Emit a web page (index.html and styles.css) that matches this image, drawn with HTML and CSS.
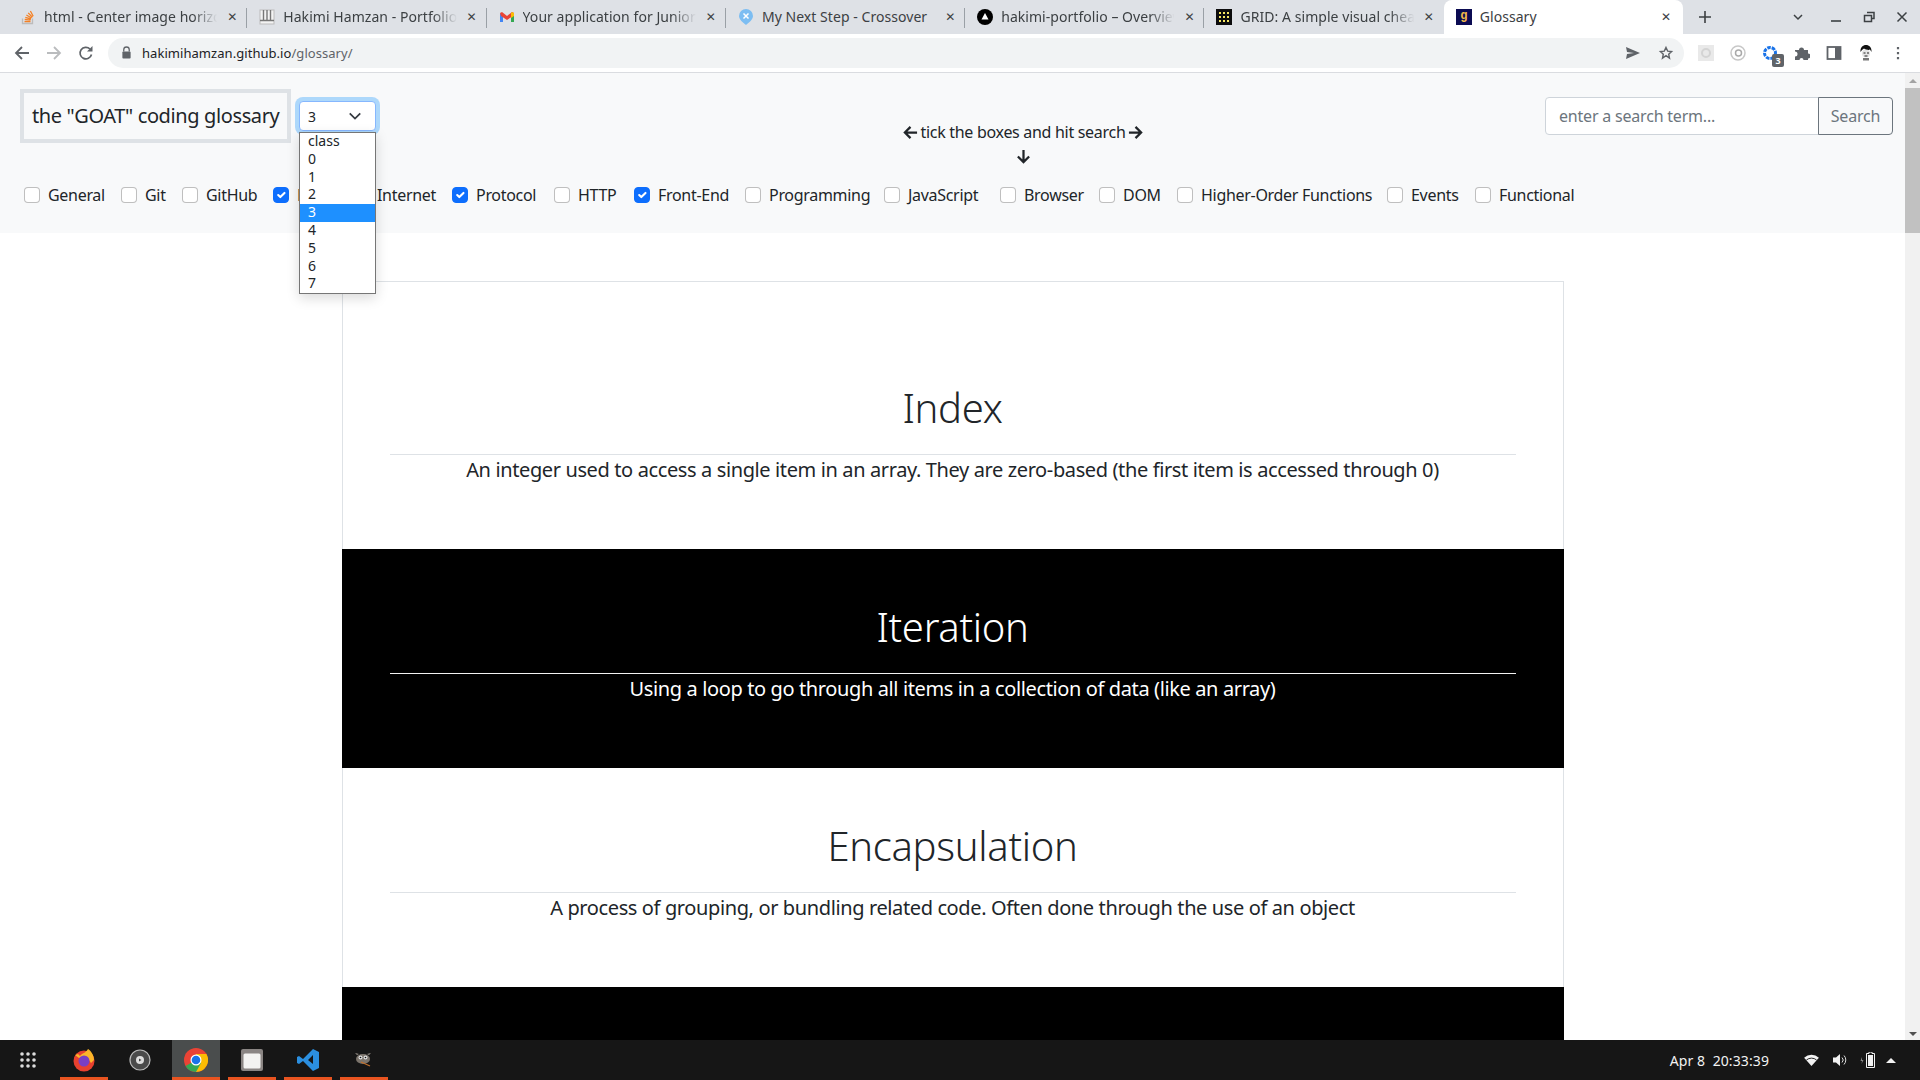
FILE: index.html
```html
<!DOCTYPE html>
<html lang="en">
<head>
    <meta charset="UTF-8">
    <title>Glossary</title>
    <link rel="stylesheet" href="styles.css">
</head>
<body>

    <!-- Browser tabs -->
    <div class="tabstrip">
        <div class="tab">
            <svg class="favicon" viewBox="0 0 16 16"><path d="M2.5 9.5v5h10v-5" fill="none" stroke="#bcbbbb" stroke-width="1.3"/><path d="M4.5 12.6h6M4.7 10.5l5.9.6M5.3 8.4l5.7 1.6M6.4 6l5.1 3M8.2 3.9l4.2 4.3M10.4 2l2.8 5.2" stroke="#f48024" stroke-width="1.3"/></svg>
            <span class="tab-title fade">html - Center image horizontally</span>
            <span class="tab-close">&#x2715;</span>
        </div>
        <div class="tab">
            <svg class="favicon" viewBox="0 0 16 16"><rect x="1" y="1" width="14" height="14" fill="#f3f3f3" stroke="#bbb"/><path d="M4.500 1v10M8 1v10M11.500 1v10M1 11.500h14" stroke="#777" stroke-width="1.400"/></svg>
            <span class="tab-title fade">Hakimi Hamzan - Portfolio</span>
            <span class="tab-close">&#x2715;</span>
        </div>
        <div class="tab">
            <svg class="favicon" viewBox="0 0 16 16"><path d="M1 4v9h3V7z" fill="#4285f4"/><path d="M15 4v9h-3V7z" fill="#34a853"/><path d="M1 4l2-1 5 4 5-4 2 1-1 3-6 4-6-4z" fill="#ea4335"/><path d="M12 4l1-1 2 1v3l-3 2z" fill="#fbbc04"/></svg>
            <span class="tab-title fade">Your application for Junior</span>
            <span class="tab-close">&#x2715;</span>
        </div>
        <div class="tab">
            <svg class="favicon" viewBox="0 0 16 16"><path d="M8 0a7 7 0 0 1 7 7c0 3.500-4 6.500-7 9-3-2.500-7-5.500-7-9a7 7 0 0 1 7-7z" fill="#7cbdf2"/><path d="M5.500 4.500l5 5M10.500 4.500l-5 5" stroke="#fff" stroke-width="1.500"/></svg>
            <span class="tab-title">My Next Step - Crossover</span>
            <span class="tab-close">&#x2715;</span>
        </div>
        <div class="tab">
            <svg class="favicon" viewBox="0 0 16 16"><circle cx="8" cy="8" r="8" fill="#000"/><path d="M8 4l3.500 6.500h-7z" fill="#fff"/></svg>
            <span class="tab-title fade">hakimi-portfolio – Overview</span>
            <span class="tab-close">&#x2715;</span>
        </div>
        <div class="tab tab-last">
            <svg class="favicon" viewBox="0 0 16 16"><rect width="16" height="16" fill="#0c0c0c"/><path d="M3 3h2v2H3zM7 3h2v2H7zM11 3h2v2h-2zM3 7h2v2H3zM7 7h2v2H7zM11 7h2v2h-2zM3 11h2v2H3zM7 11h2v2H7zM11 11h2v2h-2z" fill="#f5e663"/></svg>
            <span class="tab-title fade">GRID: A simple visual cheatsheet</span>
            <span class="tab-close">&#x2715;</span>
        </div>
        <div class="tab tab-active">
            <span class="favicon favicon-g">g</span>
            <span class="tab-title">Glossary</span>
            <span class="tab-close">&#x2715;</span>
        </div>
        <svg class="new-tab" viewBox="0 0 12 12"><path d="M6 0v12M0 6h12" stroke="#3c4043" stroke-width="1.600"/></svg>
        <div class="window-btns">
            <svg viewBox="0 0 12 12"><path d="M2 4l4 4 4-4" fill="none" stroke="#3c4043" stroke-width="1.500"/></svg>
            <svg viewBox="0 0 12 12"><path d="M1 10h10" stroke="#3c4043" stroke-width="1.600"/></svg>
            <svg viewBox="0 0 12 12"><path d="M4 1.500h7v6H8.500M1.500 4.500h7v6h-7z" fill="none" stroke="#3c4043" stroke-width="1.500"/></svg>
            <svg viewBox="0 0 12 12"><path d="M1.500 1.500l9 9M10.500 1.500l-9 9" stroke="#3c4043" stroke-width="1.500"/></svg>
        </div>
    </div>

    <!-- Address bar -->
    <div class="toolbar">
        <svg class="nav-icon" viewBox="0 0 16 16"><path d="M15 8H2M8 2L2 8l6 6" fill="none" stroke="#5f6368" stroke-width="1.800"/></svg>
        <svg class="nav-icon" viewBox="0 0 16 16"><path d="M1 8h13M8 2l6 6-6 6" fill="none" stroke="#babcbe" stroke-width="1.800"/></svg>
        <svg class="nav-icon" viewBox="0 0 16 16"><path d="M13.500 9.500A5.800 5.800 0 1 1 12 4" fill="none" stroke="#5f6368" stroke-width="1.700"/><path d="M14.500 1v5.500H9z" fill="#5f6368"/></svg>
        <div class="omnibox">
            <svg class="lock" viewBox="0 0 12 14"><path d="M3 6V4a3 3 0 0 1 6 0v2" fill="none" stroke="#5f6368" stroke-width="1.400"/><rect x="1.500" y="6" width="9" height="7.500" rx="1" fill="#5f6368"/></svg>
            <span class="url"><b>hakimihamzan.github.io</b>/glossary/</span>
            <svg class="omni-icon" viewBox="0 0 16 16"><path d="M1 2l14 6-14 6 1-5 7-1-7-1z" fill="#5f6368"/></svg>
            <svg class="omni-icon" viewBox="0 0 16 16"><path d="M8 2.500l1.700 3.600 3.900.5-2.900 2.600.8 3.900L8 10.700l-3.500 2.400.8-3.900-2.900-2.600 3.900-.5z" fill="none" stroke="#5f6368" stroke-width="1.400"/></svg>
        </div>
        <div class="extensions">
            <svg viewBox="0 0 16 16"><rect width="16" height="16" fill="#e9e9e9"/><circle cx="8" cy="8" r="4" fill="none" stroke="#d4d4d4" stroke-width="2"/></svg>
            <svg viewBox="0 0 16 16"><circle cx="8" cy="8" r="7" fill="none" stroke="#c8c8c8" stroke-width="1.500"/><circle cx="8.500" cy="8" r="3" fill="none" stroke="#aaa" stroke-width="1.500"/></svg>
            <span class="ext-badged">
                <svg viewBox="0 0 16 16"><circle cx="8" cy="8" r="5.500" fill="none" stroke="#1a73e8" stroke-width="3" stroke-dasharray="3.500 1"/></svg>
                <span class="badge">3</span>
            </span>
            <svg viewBox="0 0 16 16"><path d="M1 5h4a2.500 2.500 0 1 1 5 0h4v3.500a2.500 2.500 0 1 1 0 5V15h-4.500a2 2 0 1 0-4 0H1v-3.500a2.500 2.500 0 1 0 0-5z" fill="#5f6368"/></svg>
            <svg viewBox="0 0 16 16"><rect x="1.500" y="2" width="13" height="12" fill="none" stroke="#5f6368" stroke-width="1.800"/><rect x="9" y="2" width="5.500" height="12" fill="#5f6368"/></svg>
            <svg viewBox="0 0 16 16"><path d="M2.500 7C2 2.500 5 0 8 0s6 2.500 5.500 7L12 4.500 9 5.500 6 3.500 4 5z" fill="#111"/><circle cx="8" cy="8.500" r="4" fill="#e4e4e4"/><path d="M5.500 8h2M9 8h2M6.500 11h3" stroke="#222"/><path d="M5 13h6v2.500H5z" fill="#777"/></svg>
            <svg viewBox="0 0 16 16"><path d="M8 2v2.200M8 7v2.200M8 12v2.200" stroke="#5f6368" stroke-width="2.200"/></svg>
        </div>
    </div>

    <!-- Page -->
    <div class="viewport">
        <div class="page">
            <nav class="navbar">
                <div class="nav-top">
                    <div class="brand">the "GOAT" coding glossary</div>
                    <div class="class-select">
                        <div class="select-box">
                            <span>3</span>
                            <svg viewBox="0 0 16 16"><path d="M2 5l6 6 6-6" fill="none" stroke="#343a40" stroke-width="2"/></svg>
                        </div>
                        <ul class="select-list">
                            <li>class</li>
                            <li>0</li>
                            <li>1</li>
                            <li>2</li>
                            <li class="selected">3</li>
                            <li>4</li>
                            <li>5</li>
                            <li>6</li>
                            <li>7</li>
                        </ul>
                    </div>
                    <div class="hint">
                        <div class="hint-line">
                            <svg viewBox="0 0 16 16"><path d="M15 8H2M8 2L2 8l6 6" fill="none" stroke="#212529" stroke-width="2.400"/></svg>
                            <span>tick the boxes and hit search</span>
                            <svg viewBox="0 0 16 16"><path d="M1 8h13M8 2l6 6-6 6" fill="none" stroke="#212529" stroke-width="2.400"/></svg>
                        </div>
                        <svg class="hint-down" viewBox="0 0 16 16"><path d="M8 1v13M2 8l6 6 6-6" fill="none" stroke="#212529" stroke-width="2.400"/></svg>
                    </div>
                    <form class="search">
                        <input class="search-input" type="text" placeholder="enter a search term...">
                        <button class="search-btn" type="button">Search</button>
                    </form>
                </div>
                <div class="filters">
                    <label class="check"><input type="checkbox">General</label>
                    <label class="check"><input type="checkbox">Git</label>
                    <label class="check"><input type="checkbox">GitHub</label>
                    <label class="check"><input type="checkbox" checked>HTML</label>
                    <label class="check"><input type="checkbox">Internet</label>
                    <label class="check"><input type="checkbox" checked>Protocol</label>
                    <label class="check"><input type="checkbox">HTTP</label>
                    <label class="check"><input type="checkbox" checked>Front-End</label>
                    <label class="check"><input type="checkbox">Programming</label>
                    <label class="check"><input type="checkbox">JavaScript</label>
                    <label class="check"><input type="checkbox">Browser</label>
                    <label class="check"><input type="checkbox">DOM</label>
                    <label class="check"><input type="checkbox">Higher-Order Functions</label>
                    <label class="check"><input type="checkbox">Events</label>
                    <label class="check"><input type="checkbox">Functional</label>
                </div>
            </nav>

            <main class="card">
                <section class="term term-first">
                    <h1>Index</h1>
                    <hr>
                    <p>An integer used to access a single item in an array. They are zero-based (the first item is accessed through 0)</p>
                </section>
                <section class="term term-dark">
                    <h1>Iteration</h1>
                    <hr>
                    <p>Using a loop to go through all items in a collection of data (like an array)</p>
                </section>
                <section class="term">
                    <h1>Encapsulation</h1>
                    <hr>
                    <p>A process of grouping, or bundling related code. Often done through the use of an object</p>
                </section>
                <section class="term term-dark"></section>
            </main>
        </div>
        <div class="scrollbar">
            <span class="arrow-up"></span>
            <span class="thumb"></span>
            <span class="arrow-down"></span>
        </div>
    </div>

    <!-- Desktop panel -->
    <footer class="taskbar">
        <svg class="apps" viewBox="0 0 16 16" fill="#ddd"><circle cx="2" cy="2" r="1.800"/><circle cx="8" cy="2" r="1.800"/><circle cx="14" cy="2" r="1.800"/><circle cx="2" cy="8" r="1.800"/><circle cx="8" cy="8" r="1.800"/><circle cx="14" cy="8" r="1.800"/><circle cx="2" cy="14" r="1.800"/><circle cx="8" cy="14" r="1.800"/><circle cx="14" cy="14" r="1.800"/></svg>
        <div class="launcher running">
            <svg viewBox="0 0 24 24"><circle cx="12" cy="13" r="10.500" fill="#e8412f"/><path d="M3 7l3-1 2 2c2-3 6-3 8-7 3 2 6 6 6 11l-3 3-5-7-7 2z" fill="#fcb529"/><circle cx="12" cy="13" r="5.500" fill="#7a3fc4"/></svg>
        </div>
        <div class="launcher">
            <svg viewBox="0 0 24 24"><circle cx="12" cy="12" r="10" fill="#4a4a4a" stroke="#bbb" stroke-width="1.200"/><circle cx="12" cy="12" r="4" fill="#ddd"/><path d="M11 10.500l2.500 1.500-2.500 1.500z" fill="#444"/></svg>
        </div>
        <div class="launcher running active">
            <svg viewBox="0 0 24 24"><circle cx="12" cy="12" r="12" fill="#ea4335"/><path d="M12 6h10.400A12 12 0 0 1 12 24z" fill="#fbbc04"/><path d="M12 12L1.600 18A12 12 0 0 0 12 24l5-9z" fill="#34a853"/><circle cx="12" cy="12" r="5.500" fill="#fff"/><circle cx="12" cy="12" r="4.300" fill="#1a73e8"/></svg>
        </div>
        <div class="launcher running">
            <svg viewBox="0 0 24 24"><rect x="1" y="1" width="22" height="22" rx="2" fill="#8a8583"/><rect x="3.500" y="5.500" width="17" height="15" rx="1.500" fill="#f3f3f1"/></svg>
        </div>
        <div class="launcher running">
            <svg viewBox="0 0 24 24"><path d="M17 1l6 3v16l-6 3-10-10-4 3-2-1V9l2-1 4 3zm0 6l-5 5 5 4z" fill="#2b8fe0"/></svg>
        </div>
        <div class="launcher running">
            <svg viewBox="0 0 24 24"><ellipse cx="11" cy="11" rx="7" ry="5" fill="#7b746c"/><path d="M5 7l-2-2 4 1zM17 7l2-2-4 1z" fill="#9a938b"/><circle cx="8.500" cy="9.500" r="2" fill="#ddd"/><circle cx="13.500" cy="9.500" r="2" fill="#ddd"/><circle cx="8.500" cy="9.500" r=".8" fill="#111"/><circle cx="13.500" cy="9.500" r=".8" fill="#111"/><path d="M9 14l9 4" stroke="#c2702c" stroke-width="1.300"/></svg>
        </div>
        <div class="tray">
            <span class="clock">Apr 8&nbsp; 20:33:39</span>
            <svg class="tray-wifi" viewBox="0 0 16 13"><path d="M0 4a12 12 0 0 1 16 0l-8 9z" fill="#f2f2f2"/><path d="M2.500 6.500a8.500 8.500 0 0 1 11 0" fill="none" stroke="#161616"/></svg>
            <svg class="tray-vol" viewBox="0 0 16 14"><path d="M1 4.500h3L8 1v12L4 9.500H1z" fill="#f2f2f2"/><path d="M10 4.500a3.500 3.500 0 0 1 0 5M12 2.500a6.500 6.500 0 0 1 0 9" fill="none" stroke="#ddd"/></svg>
            <svg class="tray-bat" viewBox="0 0 16 16"><path d="M2 5l-1.500 4h1.500l-.5 3 2-4h-1.500z" fill="#888"/><path d="M9 0h3v1.500h2.500v14h-8v-14H9z" fill="none" stroke="#f2f2f2"/><rect x="8" y="3" width="5" height="11" fill="#f2f2f2"/></svg>
            <span class="tray-up"></span>
        </div>
    </footer>

</body>
</html>
```

FILE: styles.css
```css
* {
    box-sizing: border-box;
}

body {
    margin: 0;
    height: 100vh;
    overflow: hidden;
    display: flex;
    flex-direction: column;
    font-family: "Noto Sans", sans-serif;
    color: #212529;
    background: #fff;
}

/* Abas do navegador */
.tabstrip {
    height: 34px;
    flex: none;
    display: flex;
    align-items: center;
    padding-left: 8px;
    background: #dee1e6;
}

.tab {
    position: relative;
    width: 239.3px;
    height: 34px;
    flex: none;
    display: flex;
    align-items: center;
    padding: 0 8px 0 12px;
    font-size: 14px;
    letter-spacing: 0.05px;
    color: #3c4043;
}

.tab::after {
    content: "";
    position: absolute;
    right: 0;
    top: 8px;
    height: 20px;
    width: 1px;
    background: #9aa0a6;
}

.tab-last::after,
.tab-active::after {
    display: none;
}

.tab-active {
    background: #fff;
    border-radius: 8px 8px 0 0;
    padding-right: 10px;
}

.favicon {
    width: 16px;
    height: 16px;
    flex: none;
    margin-right: 8px;
}

.favicon-g {
    background: #0b0b52;
    color: #f0b849;
    font: bold 12px/15px "Liberation Mono", monospace;
    text-align: center;
}

.tab-title {
    flex: 1;
    overflow: hidden;
    white-space: nowrap;
    margin: 0 6px 2px 0;
}

.tab-title.fade {
    -webkit-mask-image: linear-gradient(to right, #000 85%, transparent 99%);
    mask-image: linear-gradient(to right, #000 85%, transparent 99%);
}

.tab-close {
    width: 14px;
    flex: none;
    font-size: 12px;
    font-weight: 700;
    font-family: "DejaVu Sans", sans-serif;
    color: #3c4043;
    text-align: center;
}

.new-tab {
    width: 12px;
    height: 12px;
    margin-left: 16px;
}

.window-btns {
    margin-left: auto;
    display: flex;
    gap: 21px;
    padding-right: 12px;
}

.window-btns svg {
    width: 12px;
    height: 12px;
}

.window-btns svg:first-child {
    margin-right: 5px;
}

/* Barra de endereco */
.toolbar {
    height: 39px;
    flex: none;
    display: flex;
    align-items: center;
    padding: 0 14px 1px;
    background: #fff;
    border-bottom: 1px solid #dadce0;
}

.nav-icon {
    width: 16px;
    height: 16px;
    margin-right: 16px;
}

.omnibox {
    width: 1576px;
    height: 30px;
    margin-left: -2px;
    flex: none;
    display: flex;
    align-items: center;
    padding: 0 10px 0 13px;
    border-radius: 15px;
    background: #f1f3f4;
}

.lock {
    width: 11px;
    height: 13px;
    margin-right: 10px;
}

.url {
    flex: 1;
    font-size: 13px;
    letter-spacing: 0.05px;
    color: #5f6368;
}

.url b {
    font-weight: 400;
    color: #202124;
}

.omni-icon {
    width: 16px;
    height: 16px;
    margin-left: 17px;
}

.extensions {
    display: flex;
    align-items: center;
    margin-left: 14px;
    gap: 16px;
}

.extensions svg {
    width: 16px;
    height: 16px;
    display: block;
}

.ext-badged {
    position: relative;
}

.badge {
    position: absolute;
    right: -6px;
    bottom: -6px;
    width: 12px;
    height: 13px;
    background: #5f6368;
    color: #fff;
    border-radius: 2px;
    font-size: 9px;
    font-weight: 700;
    line-height: 13px;
    text-align: center;
}

/* Pagina */
.viewport {
    flex: 1;
    min-height: 0;
    display: flex;
}

.page {
    flex: 1;
    min-width: 0;
    overflow: hidden;
}

.scrollbar {
    width: 15px;
    flex: none;
    display: flex;
    flex-direction: column;
    align-items: center;
    background: #f1f1f1;
}

.arrow-up {
    margin: 6px 0 5px;
    border: 4px solid transparent;
    border-top: 0;
    border-bottom: 4px solid #a3a3a3;
}

.thumb {
    width: 100%;
    height: 145px;
    background: #c1c1c1;
}

.arrow-down {
    margin-top: auto;
    margin-bottom: 4px;
    border: 4px solid transparent;
    border-bottom: 0;
    border-top: 4px solid #505050;
}

.navbar {
    height: 160px;
    padding: 16px 0 0 20px;
    background: #f8f9fa;
}

.nav-top {
    height: 94px;
    display: flex;
    align-items: flex-start;
}

.brand {
    width: 271px;
    height: 54px;
    border: 4px solid #dee2e6;
    padding: 0 0 0 8px;
    font-size: 20px;
    line-height: 45px;
    letter-spacing: -0.38px;
    white-space: nowrap;
}

.class-select {
    position: relative;
    width: 77px;
    margin: 12px 0 0 8px;
}

.select-box {
    height: 30px;
    display: flex;
    align-items: center;
    justify-content: space-between;
    padding: 0 13px 0 8px;
    border: 1px solid #86b7fe;
    border-radius: 4px;
    background: #fff;
    box-shadow: 0 0 0 4px rgba(0, 140, 255, 0.3);
    font-size: 14px;
}

.select-box svg {
    width: 14px;
    height: 14px;
}

.select-list {
    position: absolute;
    top: 31px;
    left: 0;
    width: 77px;
    margin: 0;
    padding: 0;
    list-style: none;
    background: #fff;
    border: 1px solid #767676;
    box-shadow: 0 4px 12px rgba(0, 0, 0, 0.15);
    font-size: 14px;
    line-height: 15px;
    z-index: 10;
}

.select-list li {
    height: 17.8px;
    padding-left: 8px;
}

.select-list .selected {
    background: #1e90ff;
    color: #fff;
}

.hint {
    margin: 33px 0 0 530px;
    width: 234px;
    display: flex;
    flex-direction: column;
    align-items: center;
    font-size: 16px;
    letter-spacing: -0.3px;
}

.hint-line {
    display: flex;
    align-items: center;
    gap: 3px;
    line-height: 20px;
    white-space: nowrap;
}

.hint-line svg {
    width: 15px;
    height: 15px;
}

.hint-down {
    width: 15px;
    height: 15px;
    margin-top: 7px;
}

.search {
    display: flex;
    margin: 8px 0 0 405px;
}

.search-input {
    width: 274px;
    height: 38px;
    padding: 0 13px;
    border: 1px solid #ced4da;
    border-radius: 4px 0 0 4px;
    background: #fff;
    font: 16px "Noto Sans", sans-serif;
    letter-spacing: -0.2px;
}

.search-input::placeholder {
    color: #6c757d;
}

.search-btn {
    width: 75px;
    height: 38px;
    padding: 0;
    border: 1px solid #6c757d;
    margin-left: -1px;
    border-radius: 0 4px 4px 0;
    background: transparent;
    color: #6c757d;
    font: 16px "Noto Sans", sans-serif;
    letter-spacing: -0.2px;
}

.filters {
    display: grid;
    grid-template-columns: 97px 61px 91px 80px 99px 102px 80px 111px 139px 116px 99px 78px 210px 88px auto;
    padding-left: 4px;
    height: 24px;
    align-items: center;
}

.check {
    display: flex;
    align-items: center;
    gap: 8px;
    font-size: 16px;
    letter-spacing: -0.3px;
    white-space: nowrap;
}

.check input {
    -webkit-appearance: none;
    appearance: none;
    width: 16px;
    height: 16px;
    margin: 0;
    flex: none;
    background: #fff;
    border: 1px solid rgba(0, 0, 0, 0.25);
    border-radius: 4px;
}

.check input:checked {
    background-color: #0d6efd;
    background-image: url("data:image/svg+xml,%3csvg xmlns='http://www.w3.org/2000/svg' viewBox='0 0 20 20'%3e%3cpath fill='none' stroke='%23fff' stroke-linecap='round' stroke-linejoin='round' stroke-width='3' d='M6 10l3 3l6-6'/%3e%3c/svg%3e");
    border-color: #0d6efd;
}

/* Cartoes do glossario */
.card {
    width: 1222px;
    margin: 48px auto 0;
    border: 1px solid #dee2e6;
    border-bottom: 0;
}

.term {
    height: 219px;
    padding: 54px 47px 0;
    text-align: center;
}

.term-first {
    height: 267px;
    padding-top: 102px;
}

.term-dark {
    margin: 0 -1px;
    padding: 54px 48px 0;
    background: #000;
    color: #fff;
}

.term h1 {
    margin: 0 0 22px;
    font-size: 40px;
    font-weight: 300;
    line-height: 48px;
    letter-spacing: -0.3px;
}

.term hr {
    height: 1px;
    margin: 0;
    border: 0;
    background: #dee2e6;
}

.term-dark hr {
    background: #f2f2f2;
}

.term p {
    margin: 0;
    font-size: 20px;
    line-height: 30px;
    letter-spacing: -0.38px;
}

/* Painel inferior */
.taskbar {
    height: 40px;
    flex: none;
    display: flex;
    align-items: center;
    padding-left: 4px;
    gap: 8px;
    background: #161616;
}

.apps {
    width: 16px;
    height: 16px;
    margin: 0 16px 0 16px;
}

.launcher {
    width: 48px;
    height: 40px;
    display: flex;
    align-items: center;
    justify-content: center;
    border-bottom: 3px solid transparent;
    padding-top: 2px;
}

.launcher svg {
    width: 24px;
    height: 24px;
}

.running {
    border-bottom-color: #e95420;
}

.active {
    background: #4a4d4d;
}

.tray {
    margin-left: auto;
    display: flex;
    align-items: center;
    padding-right: 24px;
    color: #f2f2f2;
    font-size: 14px;
    letter-spacing: 0.1px;
}

.clock {
    margin-right: 35px;
}

.tray-wifi {
    width: 15px;
    height: 12px;
    margin-right: 13px;
}

.tray-vol {
    width: 16px;
    height: 14px;
    margin-right: 12px;
}

.tray-bat {
    width: 16px;
    height: 16px;
    margin-right: 10px;
}

.tray-up {
    border: 5px solid transparent;
    border-top: 0;
    border-bottom: 5px solid #f2f2f2;
}
```
